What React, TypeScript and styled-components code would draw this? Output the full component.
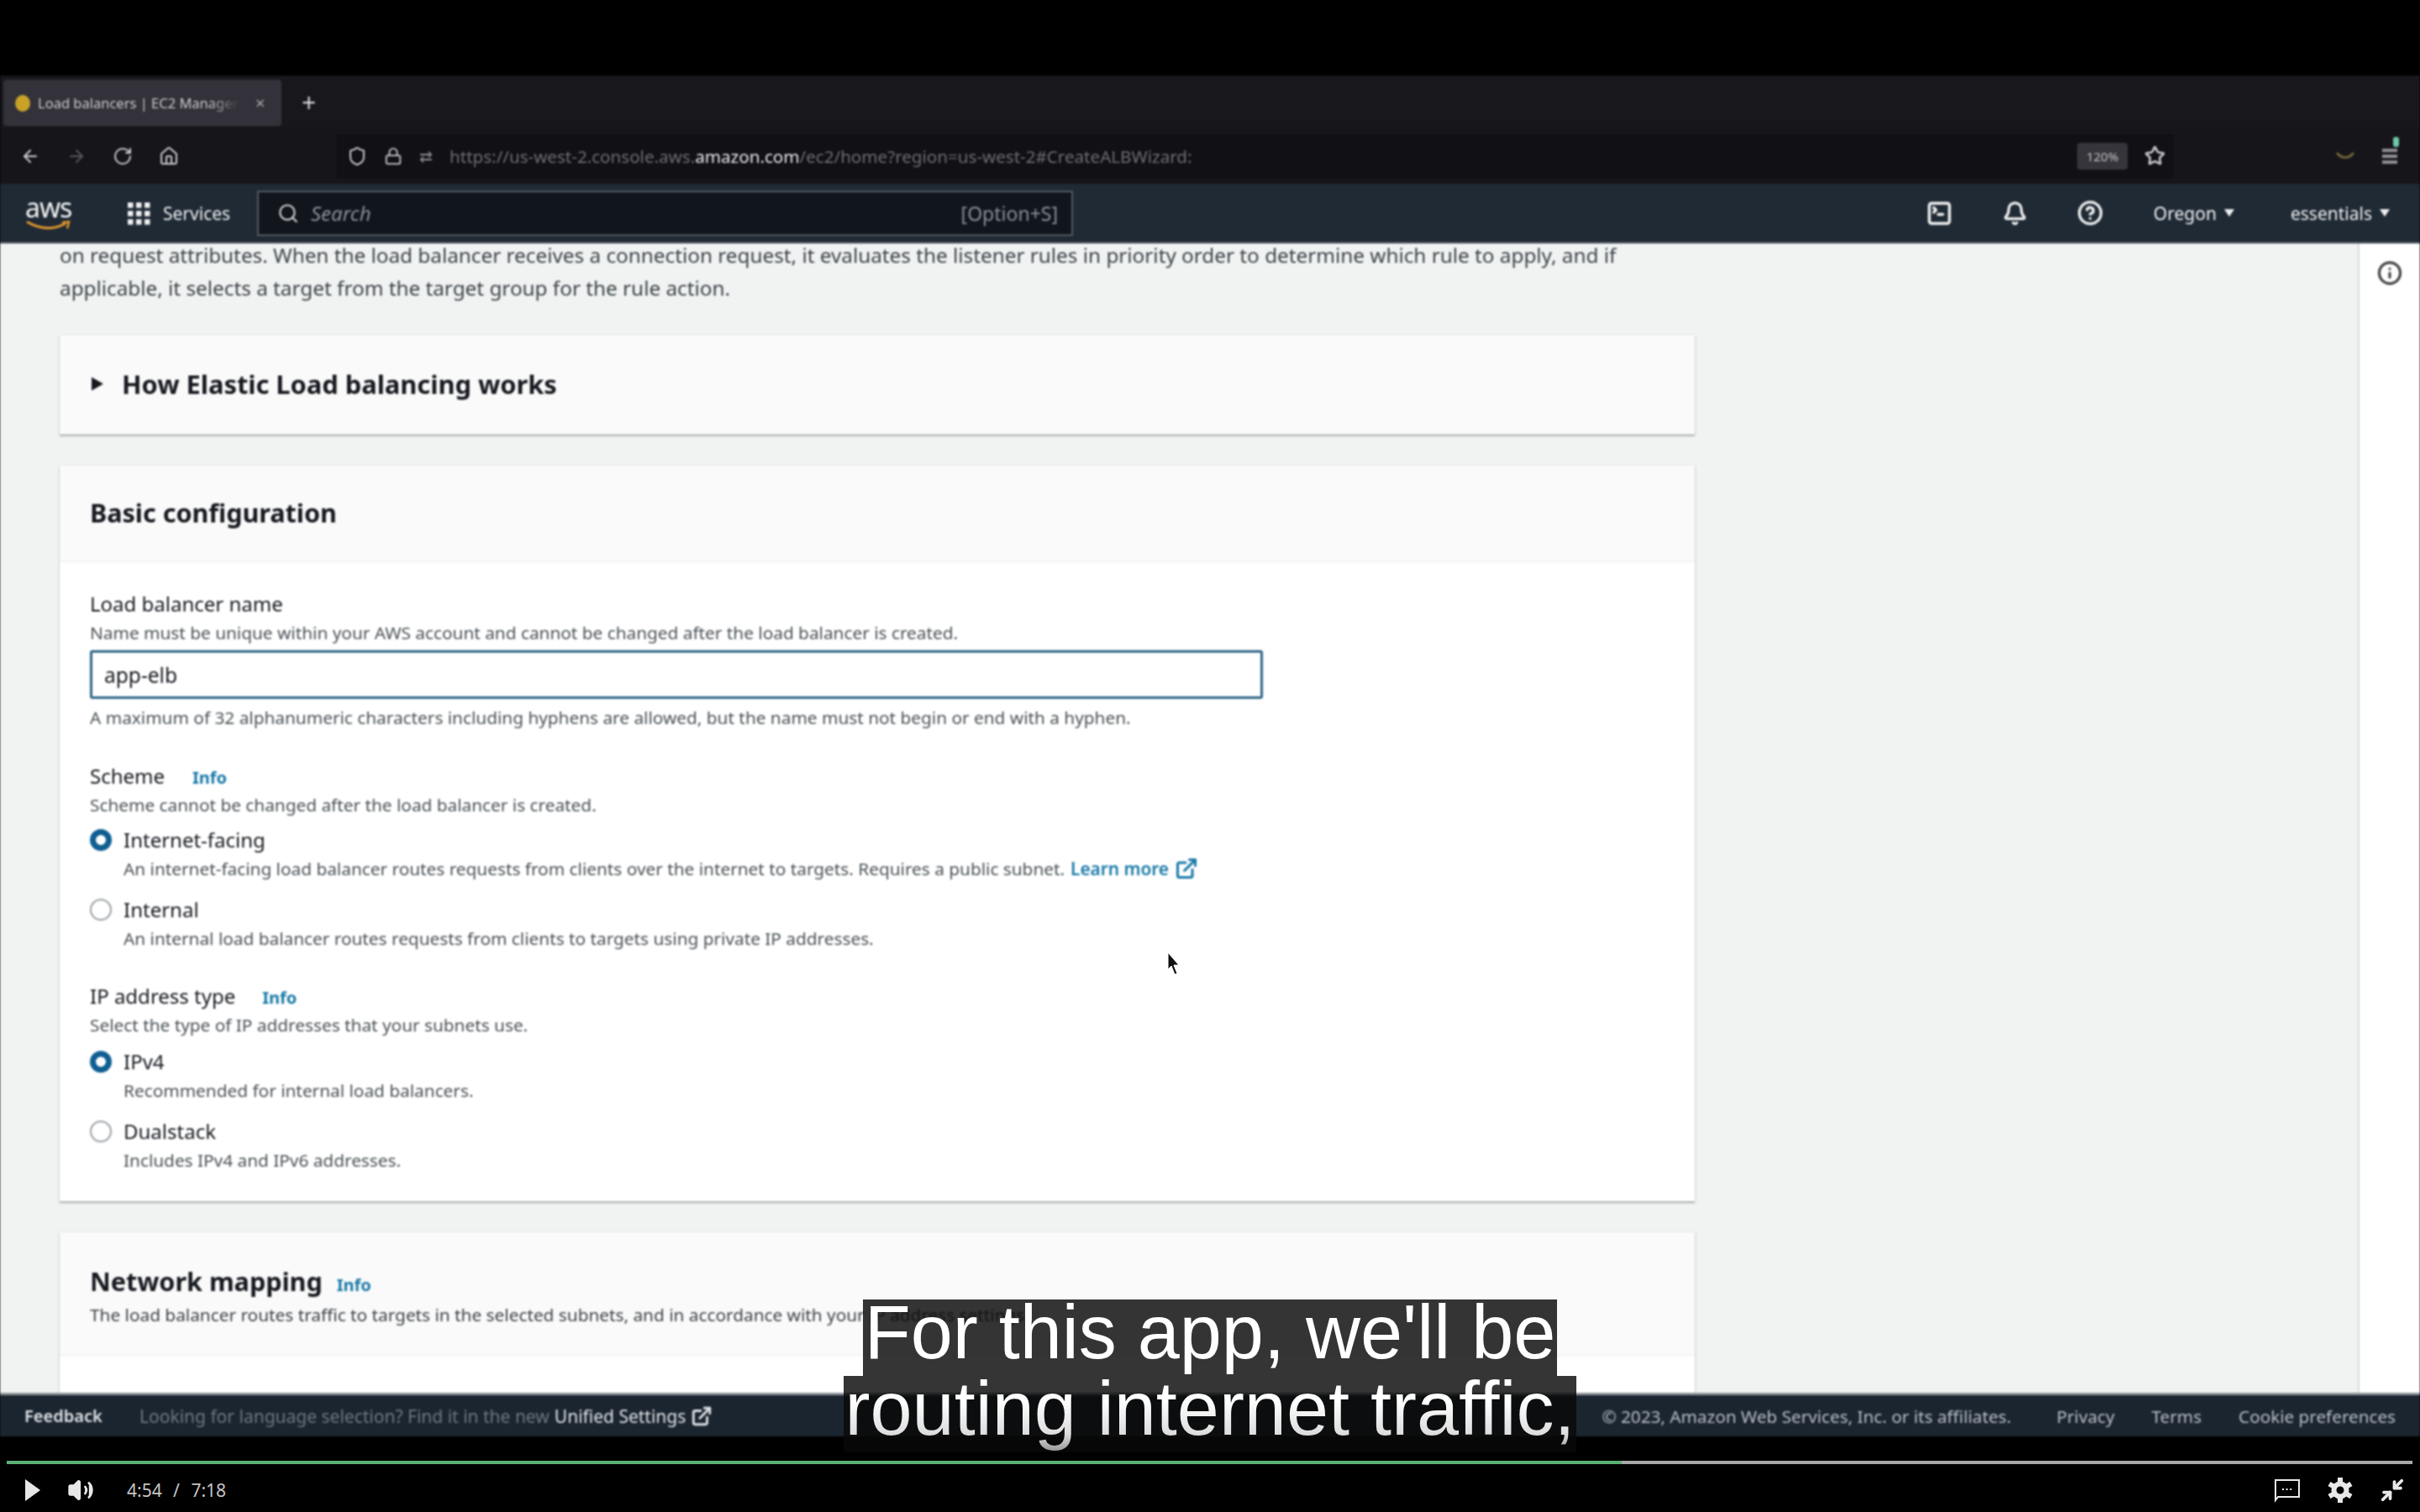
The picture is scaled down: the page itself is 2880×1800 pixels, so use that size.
import React from 'react';
import styled, { createGlobalStyle } from 'styled-components';
import {
  ArrowLeft, ArrowRight, RotateCw, Home, Shield, Lock, Star, Search, SquareTerminal,
  Bell, CircleHelp, Info, ExternalLink, Volume2, Minimize2,
} from 'lucide-react';

const GlobalStyle = createGlobalStyle`
  html, body { margin: 0; padding: 0; background: #000; }
  * { box-sizing: border-box; }
`;

const Stage = styled.div`
  position: relative;
  width: 2880px;
  height: 1800px;
  overflow: hidden;
  display: flex;
  flex-direction: column;
  background: #000;
  font-family: "Noto Sans", "Open Sans", sans-serif;
`;

const TopBlack = styled.div`
  height: 90px;
  flex: none;
`;

const Frame = styled.div`
  height: 1620px;
  flex: none;
  display: flex;
  flex-direction: column;
  filter: blur(1px);
`;

const TabStrip = styled.div`
  height: 62px;
  flex: none;
  display: flex;
  align-items: flex-start;
  padding: 5px 0 0 4px;
  background: #17171c;
  color: #c8c8cc;
`;

const Tab = styled.div`
  width: 331px;
  height: 55px;
  display: flex;
  align-items: center;
  padding: 0 14px 0 14px;
  gap: 9px;
  background: #33323a;
  border-radius: 4px;
  font-size: 16.5px;
  white-space: nowrap;
  overflow: hidden;
`;

const Favicon = styled.span`
  width: 18px;
  height: 20px;
  flex: none;
  border-radius: 50%;
  background: #c9a227;
`;

const TabTitle = styled.span`
  width: 240px;
  overflow: hidden;
  mask-image: linear-gradient(90deg, #000 85%, transparent);
`;

const TabClose = styled.span`
  margin-left: 10px;
  font-size: 20px;
  color: #a9a9ae;
`;

const NewTab = styled.span`
  margin: 8px 0 0 24px;
  font-size: 30px;
  line-height: 38px;
  color: #d5d5d8;
`;

const UrlBar = styled.div`
  height: 67px;
  flex: none;
  display: flex;
  align-items: center;
  background: #15151a;
  color: #c9c9cd;
  padding-left: 24px;
`;

const NavIcons = styled.div`
  width: 376px;
  flex: none;
  display: flex;
  align-items: center;
  gap: 31px;
`;

const Field = styled.div`
  width: 2187px;
  height: 52px;
  flex: none;
  display: flex;
  align-items: center;
  gap: 20px;
  padding-left: 13px;
  background: #101015;
`;

const PermGlyph = styled.span`
  font-size: 19px;
  color: #8c8c92;
`;

const UrlText = styled.div`
  flex: 1;
  font-size: 20.6px;
  color: #6d6d73;
  white-space: nowrap;
`;

const UrlHost = styled.span`
  color: #e8e8ea;
`;

const ZoomChip = styled.span`
  width: 60px;
  height: 32px;
  display: flex;
  align-items: center;
  justify-content: center;
  background: #35353b;
  border-radius: 4px;
  font-size: 15px;
  color: #c0c0c4;
`;

const FieldEnd = styled.div`
  width: 115px;
  display: flex;
  align-items: center;
  gap: 20px;
`;

const Extensions = styled.div`
  flex: 1;
  display: flex;
  align-items: center;
  justify-content: flex-end;
  gap: 33px;
  padding-right: 27px;
`;

const MenuIcon = styled.div`
  position: relative;
  width: 18px;
  height: 18px;
  display: flex;
  flex-direction: column;
  justify-content: space-between;
`;

const MenuLine = styled.span`
  height: 4px;
  background: #8f8f94;
`;

const MenuDot = styled.span`
  position: absolute;
  right: -2px;
  top: -14px;
  width: 7px;
  height: 12px;
  border-radius: 3px;
  background: #6fc8a8;
`;

const ConsoleHeader = styled.div`
  height: 71px;
  flex: none;
  display: flex;
  align-items: center;
  background: #1f2a35;
  color: #f0f0f0;
  border-bottom: 2px solid #5a6068;
`;

const LogoBlock = styled.div`
  width: 120px;
  margin-left: 30px;
  flex: none;
  display: flex;
  flex-direction: column;
  align-items: flex-start;
`;

const LogoText = styled.span`
  font-size: 32px;
  line-height: 30px;
  letter-spacing: -1px;
  color: #f4f4f4;
`;

const ServicesText = styled.span`
  margin: 0 30px 0 14px;
  font-size: 21px;
  width: 82px;
  flex: none;
`;

const SearchBox = styled.div`
  width: 971px;
  height: 54px;
  flex: none;
  display: flex;
  align-items: center;
  padding: 0 16px 0 22px;
  background: #11161d;
  border: 2px solid #54595f;
  color: #d0d0d0;
`;

const SearchLabel = styled.span`
  flex: 1;
  margin-left: 14px;
  font-size: 24px;
  font-style: italic;
  color: #8b9097;
`;

const SearchKey = styled.span`
  font-size: 23px;
  color: #8b9097;
`;

const HeaderTools = styled.div`
  flex: 1;
  display: flex;
  justify-content: flex-end;
  align-items: center;
  padding-right: 36px;
`;

const ToolIcon = styled.span`
  width: 90px;
  flex: none;
  display: flex;
  justify-content: center;
`;

const HeaderMenu = styled.span<{ $left: number }>`
  display: flex;
  align-items: center;
  gap: 9px;
  margin-left: ${p => p.$left}px;
  font-size: 21px;
  white-space: nowrap;
`;

const Caret = styled.span`
  width: 0;
  height: 0;
  border-left: 6px solid transparent;
  border-right: 6px solid transparent;
  border-top: 9px solid #f0f0f0;
`;

const Main = styled.div`
  flex: 1;
  min-height: 0;
  display: flex;
  overflow: hidden;
  background: #f1f3f3;
`;

const Content = styled.div`
  flex: 1;
  min-width: 0;
  padding-left: 71px;
`;

const SidePanel = styled.div`
  width: 74px;
  flex: none;
  display: flex;
  justify-content: center;
  padding-top: 20px;
  background: #fff;
  border-left: 2px solid #d8dcdc;
  color: #444;
`;

const Intro = styled.p`
  width: 1900px;
  margin: -5px 0 0;
  font-size: 24.3px;
  line-height: 38.5px;
  color: #3d4448;
`;

const Card = styled.div<{ $top: number }>`
  width: 1946px;
  margin-top: ${p => p.$top}px;
  background: #fff;
  box-shadow: 0 2px 2px #a9adad, 0 0 2px #d0d4d4;
`;

const ExpandHeader = styled.div`
  height: 118px;
  display: flex;
  align-items: center;
  gap: 22px;
  padding: 0 0 3px 38px;
  background: #fafafa;
  font-size: 30.8px;
  font-weight: 700;
  color: #16191f;
`;

const ExpandCaret = styled.span`
  width: 0;
  height: 0;
  border-top: 8px solid transparent;
  border-bottom: 8px solid transparent;
  border-left: 14px solid #16191f;
`;

const CardHeader = styled.div<{ $height: number }>`
  height: ${p => p.$height}px;
  padding-left: 36px;
  background: #fafafa;
  border-bottom: 1px solid #eaeded;
`;

const CardTitleRow = styled.div<{ $top: number }>`
  padding-top: ${p => p.$top}px;
  display: flex;
  align-items: baseline;
  gap: 17px;
`;

const CardTitle = styled.h2`
  margin: 0;
  font-size: 30.5px;
  line-height: 42px;
  font-weight: 700;
  color: #16191f;
`;

const CardHint = styled.div`
  font-size: 20.8px;
  line-height: 30px;
  margin-top: 4px;
  color: #3d4448;
`;

const CardBody = styled.div`
  height: 761px;
  padding: 35px 36px 0;
`;

const Label = styled.div<{ $top?: number; $gap?: number }>`
  display: flex;
  align-items: baseline;
  gap: ${p => p.$gap ?? 20}px;
  margin-top: ${p => p.$top ?? 0}px;
  font-size: 24px;
  line-height: 30px;
  color: #16191f;
`;

const InfoLink = styled.span`
  font-size: 20px;
  font-weight: 700;
  color: #1a7aa8;
`;

const Hint = styled.div<{ $top?: number }>`
  margin-top: ${p => p.$top ?? 4}px;
  font-size: 20.8px;
  line-height: 30px;
  color: #4b5257;
  display: flex;
  align-items: center;
  gap: 7px;
`;

const NameInput = styled.div`
  width: 1396px;
  height: 58px;
  margin-top: 6px;
  display: flex;
  align-items: center;
  padding-left: 14px;
  border: 3px solid #2f6687;
  border-radius: 3px;
  font-size: 24.5px;
  color: #16191f;
`;

const RadioRow = styled.div<{ $top: number }>`
  display: flex;
  gap: 14px;
  margin-top: ${p => p.$top}px;
`;

const RadioDot = styled.span<{ $on?: boolean }>`
  width: 26px;
  height: 26px;
  flex: none;
  margin-top: 3px;
  border-radius: 50%;
  background: #fff;
  border: ${p => (p.$on ? '7px solid #0f5f92' : '2px solid #9aa0a4')};
`;

const RadioLabel = styled.div`
  font-size: 24px;
  line-height: 32px;
  color: #16191f;
`;

const LearnMore = styled.span`
  font-weight: 600;
  color: #1a7aa8;
`;

const IconLink = styled.span`
  display: flex;
  color: #1a7aa8;
`;

const Footer = styled.div`
  height: 52px;
  flex: none;
  display: flex;
  align-items: center;
  padding: 0 29px;
  background: #1b2530;
  border-top: 3px solid #8d9296;
  font-size: 21px;
  color: #b9bec4;
  white-space: nowrap;
`;

const FooterFeedback = styled.span`
  width: 137px;
  flex: none;
  font-size: 20px;
  font-weight: 600;
  color: #dfe2e6;
`;

const FooterNote = styled.span`
  color: #6e7680;
  display: flex;
  align-items: center;
  gap: 6px;
`;

const FooterBright = styled.span`
  color: #dfe2e6;
`;

const FooterRight = styled.div`
  margin-left: auto;
  display: flex;
  gap: 44px;
  font-size: 20.7px;
`;

const FooterCopy = styled.span`
  margin-right: 10px;
`;

const FooterIcon = styled.span`
  display: flex;
  color: #dfe2e6;
`;

const Player = styled.div`
  flex: 1;
  display: flex;
  flex-direction: column;
  padding: 29px 9px 0 8px;
`;

const Track = styled.div`
  height: 4px;
  flex: none;
  background: #a8a8a8;
`;

const TrackFill = styled.div`
  height: 100%;
  background: #5bb073;
`;

const Controls = styled.div`
  flex: 1;
  display: flex;
  align-items: center;
  padding: 4px 9px 0 22px;
  color: #e8e8e8;
`;

const PlayShape = styled.span`
  width: 0;
  height: 0;
  margin-right: 32px;
  border-top: 13px solid transparent;
  border-bottom: 13px solid transparent;
  border-left: 18px solid #e6e6e6;
`;

const TimeText = styled.span`
  margin-left: 39px;
  font-size: 21px;
  color: #c4c4c4;
  word-spacing: 8px;
`;

const ControlsEnd = styled.div`
  margin-left: auto;
  display: flex;
  align-items: center;
  gap: 32px;
`;

const Caption = styled.div`
  position: absolute;
  left: 0;
  right: 0;
  top: 1547px;
  display: flex;
  flex-direction: column;
  align-items: center;
  font-family: "Liberation Sans", Arial, sans-serif;
  font-size: 90px;
  color: #fff;
`;

const CaptionLine = styled.div`
  height: 91px;
  padding: 0 2px;
  line-height: 79px;
  background: rgba(8, 8, 8, 0.82);
  white-space: nowrap;
`;

const FadedText = styled.span`
  background: linear-gradient(#fff 40%, #ddd 80%, #999 100%);
  -webkit-background-clip: text;
  background-clip: text;
  color: transparent;
`;

const Cursor = styled.svg`
  position: absolute;
  left: 1389px;
  top: 1133px;
`;

const Grid = () => (
  <svg width="30" height="30" viewBox="0 0 30 30" fill="#f0f0f0">
    {[2, 12, 22].flatMap(y => [2, 12, 22].map(x => <rect key={`${x}-${y}`} x={x} y={y} width="6.5" height="6.5" />))}
  </svg>
);

const CaptionsIcon = () => (
  <svg width="32" height="30" viewBox="0 0 32 30" fill="none" stroke="#e8e8e8" strokeWidth="2">
    <path d="M2 3 H30 V23 H5 L2 27 Z" />
    <path d="M10 14 H22" strokeDasharray="2 2.6" />
  </svg>
);

const GearIcon = () => (
  <svg width="30" height="32" viewBox="0 0 30 32" fill="none" stroke="#e8e8e8">
    <circle cx="15" cy="16" r="7.5" strokeWidth="6" />
    {[0, 60, 120, 180, 240, 300].map(a => (
      <path key={a} d="M15 1 V7" strokeWidth="6" transform={`rotate(${a} 15 16)`} />
    ))}
  </svg>
);

const App = () => (
  <Stage>
    <GlobalStyle />
    <TopBlack />
    <Frame>
      <TabStrip>
        <Tab>
          <Favicon />
          <TabTitle>Load balancers | EC2 Managem</TabTitle>
          <TabClose>×</TabClose>
        </Tab>
        <NewTab>+</NewTab>
      </TabStrip>
      <UrlBar>
        <NavIcons>
          <ArrowLeft size={24} />
          <ArrowRight size={24} color="#55555a" />
          <RotateCw size={24} />
          <Home size={24} />
        </NavIcons>
        <Field>
          <Shield size={24} />
          <Lock size={22} />
          <PermGlyph>⇄</PermGlyph>
          <UrlText>
            https://us-west-2.console.aws.<UrlHost>amazon.com</UrlHost>/ec2/home?region=us-west-2#CreateALBWizard:
          </UrlText>
          <FieldEnd>
            <ZoomChip>120%</ZoomChip>
            <Star size={25} strokeWidth={2.5} />
          </FieldEnd>
        </Field>
        <Extensions>
          <svg width="22" height="10" viewBox="0 0 22 10" fill="none" stroke="#6f6235" strokeWidth="3"><path d="M1 1 Q11 12 21 1" /></svg>
          <MenuIcon>
            <MenuDot />
            <MenuLine />
            <MenuLine />
            <MenuLine />
          </MenuIcon>
        </Extensions>
      </UrlBar>
      <ConsoleHeader>
        <LogoBlock>
          <LogoText>aws</LogoText>
          <svg width="56" height="14" viewBox="0 0 56 14" fill="none" stroke="#e0962c" strokeWidth="3">
            <path d="M2 2 Q26 16 48 4" />
            <path d="M44 3 L52 2 L50 10" strokeWidth="2.5" />
          </svg>
        </LogoBlock>
        <Grid />
        <ServicesText>Services</ServicesText>
        <SearchBox>
          <Search size={26} />
          <SearchLabel>Search</SearchLabel>
          <SearchKey>[Option+S]</SearchKey>
        </SearchBox>
        <HeaderTools>
          <ToolIcon><SquareTerminal size={32} strokeWidth={2.6} /></ToolIcon>
          <ToolIcon><Bell size={30} strokeWidth={2.6} /></ToolIcon>
          <ToolIcon><CircleHelp size={31} strokeWidth={2.6} /></ToolIcon>
          <HeaderMenu $left={30}>Oregon <Caret /></HeaderMenu>
          <HeaderMenu $left={67}>essentials <Caret /></HeaderMenu>
        </HeaderTools>
      </ConsoleHeader>
      <Main>
        <Content>
          <Intro>
            on request attributes. When the load balancer receives a connection request, it evaluates the listener rules in priority order to determine which rule to apply, and if applicable, it selects a target from the target group for the rule action.
          </Intro>
          <Card $top={37}>
            <ExpandHeader>
              <ExpandCaret />
              How Elastic Load balancing works
            </ExpandHeader>
          </Card>
          <Card $top={37}>
            <CardHeader $height={115}>
              <CardTitleRow $top={35}>
                <CardTitle>Basic configuration</CardTitle>
              </CardTitleRow>
            </CardHeader>
            <CardBody>
              <Label>Load balancer name</Label>
              <Hint>Name must be unique within your AWS account and cannot be changed after the load balancer is created.</Hint>
              <NameInput>app-elb</NameInput>
              <Hint $top={7}>A maximum of 32 alphanumeric characters including hyphens are allowed, but the name must not begin or end with a hyphen.</Hint>
              <Label $top={40} $gap={33}>Scheme <InfoLink>Info</InfoLink></Label>
              <Hint $top={2}>Scheme cannot be changed after the load balancer is created.</Hint>
              <RadioRow $top={11}>
                <RadioDot $on />
                <div>
                  <RadioLabel>Internet-facing</RadioLabel>
                  <Hint $top={3}>
                    An internet-facing load balancer routes requests from clients over the internet to targets. Requires a public subnet.
                    <LearnMore>Learn more</LearnMore>
                    <IconLink><ExternalLink size={28} strokeWidth={2.6} /></IconLink>
                  </Hint>
                </div>
              </RadioRow>
              <RadioRow $top={18}>
                <RadioDot />
                <div>
                  <RadioLabel>Internal</RadioLabel>
                  <Hint $top={3}>An internal load balancer routes requests from clients to targets using private IP addresses.</Hint>
                </div>
              </RadioRow>
              <Label $top={39} $gap={32}>IP address type <InfoLink>Info</InfoLink></Label>
              <Hint $top={2}>Select the type of IP addresses that your subnets use.</Hint>
              <RadioRow $top={13}>
                <RadioDot $on />
                <div>
                  <RadioLabel>IPv4</RadioLabel>
                  <Hint $top={3}>Recommended for internal load balancers.</Hint>
                </div>
              </RadioRow>
              <RadioRow $top={18}>
                <RadioDot />
                <div>
                  <RadioLabel>Dualstack</RadioLabel>
                  <Hint $top={3}>Includes IPv4 and IPv6 addresses.</Hint>
                </div>
              </RadioRow>
            </CardBody>
          </Card>
          <Card $top={37}>
            <CardHeader $height={147}>
              <CardTitleRow $top={37}>
                <CardTitle>Network mapping</CardTitle>
                <InfoLink>Info</InfoLink>
              </CardTitleRow>
              <CardHint>The load balancer routes traffic to targets in the selected subnets, and in accordance with your IP address settings.</CardHint>
            </CardHeader>
            <CardBody />
          </Card>
        </Content>
        <SidePanel><Info size={30} strokeWidth={2.6} /></SidePanel>
      </Main>
      <Footer>
        <FooterFeedback>Feedback</FooterFeedback>
        <FooterNote>
          Looking for language selection? Find it in the new <FooterBright>Unified Settings</FooterBright>
          <FooterIcon><ExternalLink size={26} strokeWidth={2.6} /></FooterIcon>
        </FooterNote>
        <FooterRight>
          <FooterCopy>© 2023, Amazon Web Services, Inc. or its affiliates.</FooterCopy>
          <span>Privacy</span>
          <span>Terms</span>
          <span>Cookie preferences</span>
        </FooterRight>
      </Footer>
    </Frame>
    <Player>
      <Track>
        <TrackFill style={{ width: `${(294 / 438) * 100}%` }} />
      </Track>
      <Controls>
        <PlayShape />
        <Volume2 size={32} fill="#e8e8e8" />
        <TimeText>4:54 / 7:18</TimeText>
        <ControlsEnd>
          <CaptionsIcon />
          <GearIcon />
          <Minimize2 size={30} strokeWidth={3} />
        </ControlsEnd>
      </Controls>
    </Player>
    <Cursor width="16" height="30" viewBox="0 0 16 30">
      <path d="M1 1 L1 21 L5 17 L9 27 L12 26 L8 16 L14 16 Z" fill="#111" stroke="#fff" strokeWidth="1" />
    </Cursor>
    <Caption>
      <CaptionLine>For this app, we'll be</CaptionLine>
      <CaptionLine><FadedText>routing internet traffic,</FadedText></CaptionLine>
    </Caption>
  </Stage>
);

export default App;
